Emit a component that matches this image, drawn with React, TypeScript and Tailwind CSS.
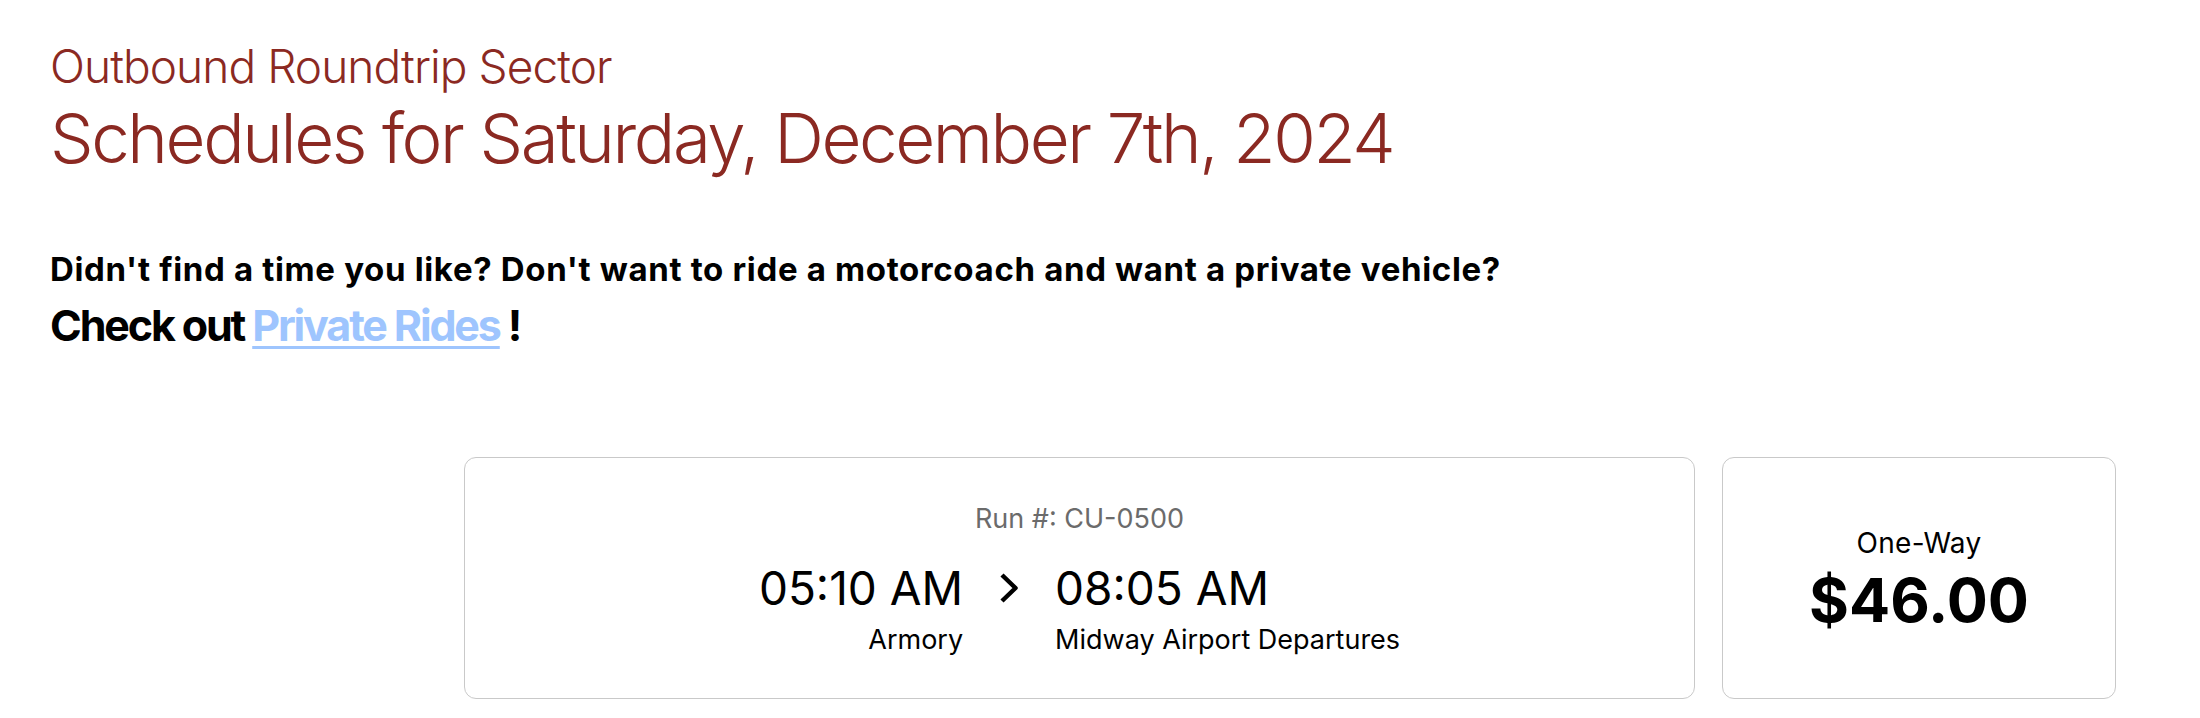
const sans = "font-['Inter','Liberation_Sans',sans-serif]";

function TripCard() {
  return (
    <div className="w-[1231px] h-[242px] border border-[#c9c9c9] rounded-xl flex flex-col items-center justify-center pt-[3px]">
      <div className={`${sans} text-[27px] leading-[32px] text-[#6b6b6b]`}>Run #: CU-0500</div>
      <div className="mt-[25px] flex items-start gap-[36px] text-black">
        <div className="flex flex-col items-end text-right">
          <div className={`${sans} text-[46px] leading-[56px]`}>05:10 AM</div>
          <div className={`${sans} text-[27px] leading-[34px] mt-[7px]`}>Armory</div>
        </div>
        <div className="h-[56px] flex items-center">
          <svg width="20" height="32" viewBox="0 0 20 32" fill="none">
            <polyline points="3,3 16.5,16 3,29" stroke="#000" strokeWidth="4.5" strokeLinejoin="round" />
          </svg>
        </div>
        <div className="flex flex-col items-start">
          <div className={`${sans} text-[46px] leading-[56px]`}>08:05 AM</div>
          <div className={`${sans} text-[27px] leading-[34px] mt-[7px]`}>Midway Airport Departures</div>
        </div>
      </div>
    </div>
  );
}

function PriceCard() {
  return (
    <div className="w-[394px] h-[242px] border border-[#c9c9c9] rounded-xl flex flex-col items-center justify-center pt-[6px] text-black">
      <div className={`${sans} text-[28px] leading-[32px] tracking-[0.01em]`}>One-Way</div>
      <div className={`${sans} text-[61px] leading-[70px] font-bold mt-[6px]`}>$46.00</div>
    </div>
  );
}

export default function App() {
  return (
    <div className="min-h-screen bg-white px-[50px] pt-[39px]">
      <div className={`${sans} text-[46px] leading-[55px] font-light tracking-[-0.02em] text-[#8b2922]`}>
        Outbound Roundtrip Sector
      </div>
      <h1 className={`${sans} text-[69px] leading-[84px] font-light tracking-[-0.035em] text-[#8b2922] mt-[2px]`}>
        Schedules for Saturday, December 7th, 2024
      </h1>

      <div className={`${sans} mt-[70px] font-bold text-black`}>
        <div className="text-[33px] leading-[38px] tracking-[0.02em]">
          Didn't find a time you like? Don't want to ride a motorcoach and want a private vehicle?
        </div>
        <div className="mt-[15px] text-[43px] leading-[44px] tracking-[-0.05em]">
          Check out{' '}
          <a href="#" className="text-[#9ec5fe] underline underline-offset-[5px] decoration-[3px]">
            Private Rides
          </a>{' '}
          !
        </div>
      </div>

      <div className="mt-[110px] ml-[414px] flex gap-[27px]">
        <TripCard />
        <PriceCard />
      </div>
    </div>
  );
}
